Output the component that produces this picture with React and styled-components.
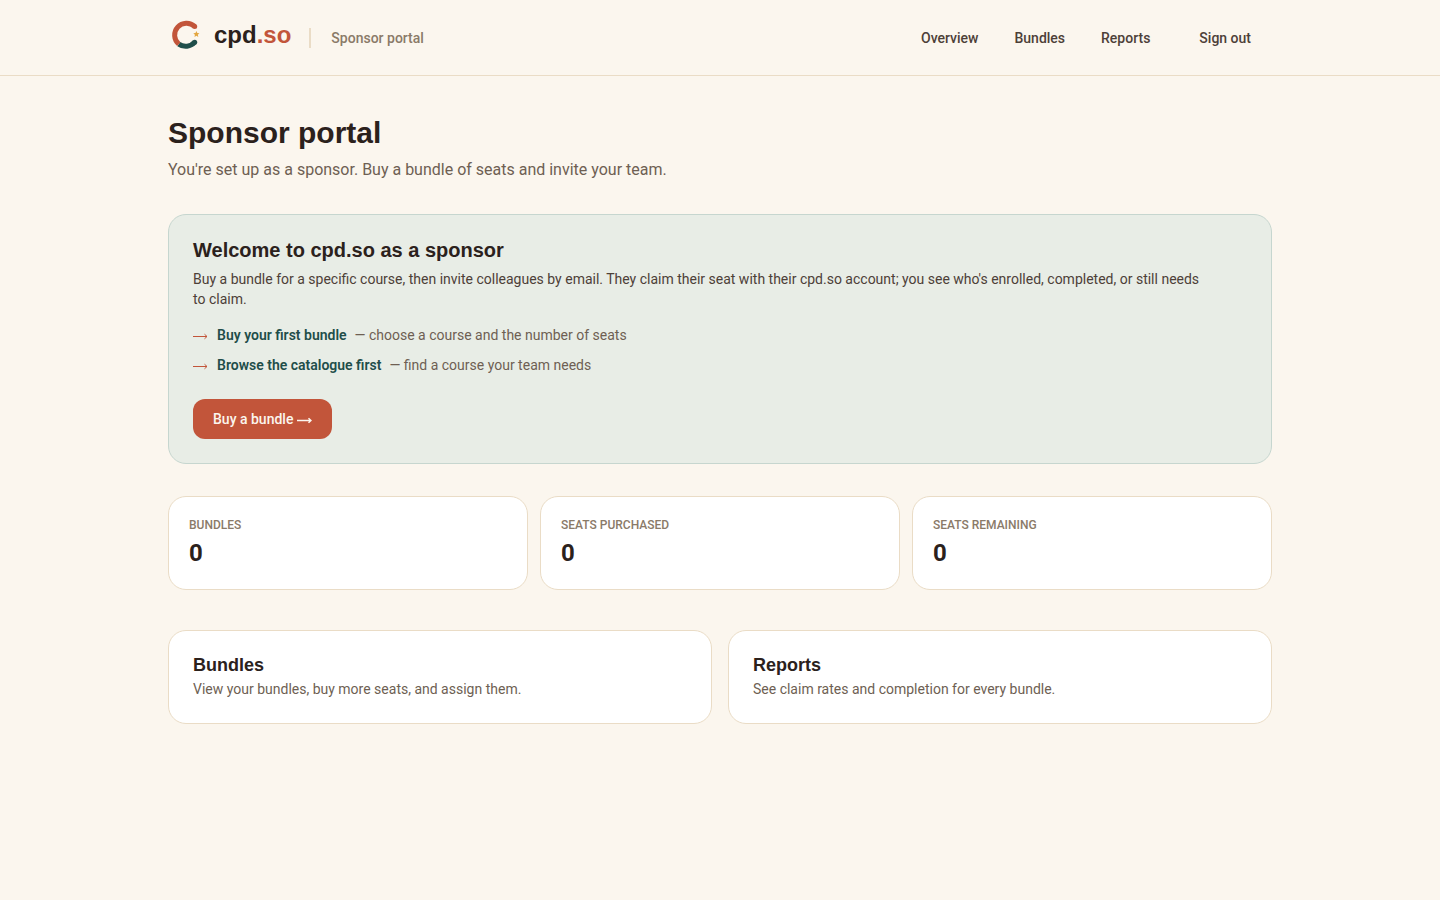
import React from "react";
import styled, { createGlobalStyle } from "styled-components";

const stats = [
    { label: "Bundles", value: 0 },
    { label: "Seats purchased", value: 0 },
    { label: "Seats remaining", value: 0 },
];

const steps = [
    { link: "Buy your first bundle", text: "— choose a course and the number of seats" },
    { link: "Browse the catalogue first", text: "— find a course your team needs" },
];

const sections = [
    { title: "Bundles", text: "View your bundles, buy more seats, and assign them." },
    { title: "Reports", text: "See claim rates and completion for every bundle." },
];

export default function App() {
    return (
        <>
            <GlobalStyle />
            <Header>
                <HeaderInner>
                    <Brand>
                        <Logo href="#">
                            <LogoMark />
                            <Wordmark>cpd<span>.so</span></Wordmark>
                        </Logo>
                        <PortalName>Sponsor portal</PortalName>
                    </Brand>
                    <Nav>
                        <NavLink href="#">Overview</NavLink>
                        <NavLink href="#">Bundles</NavLink>
                        <NavLink href="#">Reports</NavLink>
                        <SignOut type="button">Sign out</SignOut>
                    </Nav>
                </HeaderInner>
            </Header>

            <Main>
                <Title>Sponsor portal</Title>
                <Subtitle>You're set up as a sponsor. Buy a bundle of seats and invite your team.</Subtitle>

                <Welcome>
                    <h2>Welcome to cpd.so as a sponsor</h2>
                    <p>
                        Buy a bundle for a specific course, then invite colleagues by email. They claim their
                        seat with their cpd.so account; you see who's enrolled, completed, or still needs to&nbsp;claim.
                    </p>
                    <Steps>
                        {steps.map((step) => (
                            <Step key={step.link}>
                                <Arrow />
                                <a href="#">{step.link}</a>
                                <span>{step.text}</span>
                            </Step>
                        ))}
                    </Steps>
                    <BuyButton type="button">
                        Buy a bundle <Arrow weight={1.5} />
                    </BuyButton>
                </Welcome>

                <Stats>
                    {stats.map((stat) => (
                        <StatCard key={stat.label}>
                            <dt>{stat.label}</dt>
                            <dd>{stat.value}</dd>
                        </StatCard>
                    ))}
                </Stats>

                <Sections>
                    {sections.map((section) => (
                        <SectionCard key={section.title} href="#">
                            <h3>{section.title}</h3>
                            <p>{section.text}</p>
                        </SectionCard>
                    ))}
                </Sections>
            </Main>
        </>
    );
}

function LogoMark() {
    return (
        <svg width="36" height="36" viewBox="0 0 36 36" fill="none" aria-hidden="true">
            <path d="M26.7 25.2A11.9 11.9 0 0 1 10.8 27.1" stroke="#1f4e4a" strokeWidth="5" />
            <circle cx="26.7" cy="25.2" r="2.5" fill="#1f4e4a" />
            <path d="M26.7 9.4A11.9 11.9 0 1 0 10.8 27.1" stroke="#c2553a" strokeWidth="5" />
            <circle cx="26.7" cy="9.4" r="2.5" fill="#c2553a" />
            <path
                d="M28.4 14l.9 2 2.1.2-1.6 1.5.5 2.2-1.9-1.1-1.9 1.1.4-2.2-1.6-1.5 2.2-.2z"
                fill="#e3a63f"
            />
        </svg>
    );
}

function Arrow({ weight = 1 }) {
    return (
        <svg
            width="15"
            height="10"
            viewBox="0 0 15 10"
            fill="none"
            stroke="currentColor"
            strokeWidth={weight}
            aria-hidden="true"
        >
            <path d="M0 6.5h14M11.5 4.2l2.5 2.3-2.5 2.3" />
        </svg>
    );
}

const GlobalStyle = createGlobalStyle`
    :root{
        --titleFont: "Liberation Sans", Arial, sans-serif;
        --bodyFont: Roboto, "Liberation Sans", sans-serif;
        --ink: #2b211c;
        --border: #eadcc6;
    }

    *{
        box-sizing: border-box;
        margin: 0;
        padding: 0;
    }

    body{
        background: #fbf6ee;
        color: var(--ink);
        font-family: var(--bodyFont);
        font-size: 14px;
        line-height: 20px;
        -webkit-font-smoothing: antialiased;
    }

    a{
        color: inherit;
        text-decoration: none;
    }
`;

const Header = styled.header`
    border-bottom: 1px solid var(--border);
`;

const HeaderInner = styled.div`
    display: flex;
    align-items: center;
    justify-content: space-between;
    max-width: 1152px;
    min-height: 75px;
    margin: 0 auto;
    padding: 0 24px;
`;

const Brand = styled.div`
    display: flex;
    align-items: center;
    gap: 18px;
`;

const Logo = styled.a`
    display: flex;
    align-items: center;
    gap: 10px;
    padding-bottom: 6px;
`;

const Wordmark = styled.span`
    font-family: var(--titleFont);
    font-size: 24px;
    font-weight: 700;
    line-height: 32px;

    span{
        color: #c2553a;
    }
`;

const PortalName = styled.span`
    padding-left: 20px;
    border-left: 2px solid var(--border);
    color: #8a7a68;
    font-weight: 500;
`;

const Nav = styled.nav`
    display: flex;
    align-items: center;
    gap: 4px;
    color: #4d4038;
    font-weight: 500;
`;

const NavLink = styled.a`
    padding: 8px 16px;
`;

const SignOut = styled.button`
    margin-left: 8px;
    padding: 8px 21px;
    border: none;
    background: none;
    color: inherit;
    font: inherit;
    cursor: pointer;
`;

const Main = styled.main`
    max-width: 1152px;
    margin: 0 auto;
    padding: 40px 24px;
`;

const Title = styled.h1`
    font-family: var(--titleFont);
    font-size: 30px;
    font-weight: 700;
    line-height: 34px;
`;

const Subtitle = styled.p`
    margin-top: 8px;
    color: #6e5f53;
    font-size: 16px;
    line-height: 24px;
`;

const Welcome = styled.section`
    margin-top: 32px;
    padding: 24px;
    border: 1px solid #c6d6cf;
    border-radius: 18px;
    background: #e8ede6;

    h2{
        margin-bottom: 8px;
        font-family: var(--titleFont);
        font-size: 20px;
        font-weight: 700;
        line-height: 22px;
    }

    p{
        color: #4d4038;
    }
`;

const Steps = styled.ul`
    display: flex;
    flex-direction: column;
    gap: 10px;
    margin: 16px 0 24px;
    list-style: none;
`;

const Step = styled.li`
    display: flex;
    align-items: center;
    color: #6e5f53;

    svg{
        margin-right: 9px;
        color: #c2553a;
    }

    a{
        margin-right: 8px;
        color: #1f4e4a;
        font-weight: 600;
    }
`;

const BuyButton = styled.button`
    display: flex;
    align-items: center;
    gap: 4px;
    padding: 10px 20px;
    border: none;
    border-radius: 12px;
    background: #c2553a;
    color: #fbf6ee;
    font: inherit;
    font-weight: 500;
    cursor: pointer;
`;

const Stats = styled.dl`
    display: grid;
    grid-template-columns: repeat(3, 1fr);
    gap: 12px;
    margin-top: 32px;
`;

const StatCard = styled.div`
    padding: 20px;
    border: 1px solid var(--border);
    border-radius: 18px;
    background: #fff;

    dt{
        color: #8a7a68;
        font-size: 12px;
        font-weight: 500;
        line-height: 16px;
        text-transform: uppercase;
    }

    dd{
        margin-top: 4px;
        font-size: 24px;
        font-weight: 700;
        line-height: 32px;
    }
`;

const Sections = styled.div`
    display: grid;
    grid-template-columns: repeat(2, 1fr);
    gap: 16px;
    margin-top: 40px;
`;

const SectionCard = styled.a`
    padding: 24px;
    border: 1px solid var(--border);
    border-radius: 18px;
    background: #fff;

    h3{
        font-family: var(--titleFont);
        font-size: 18px;
        font-weight: 700;
        line-height: 20px;
    }

    p{
        margin-top: 4px;
        color: #6e5f53;
    }
`;
